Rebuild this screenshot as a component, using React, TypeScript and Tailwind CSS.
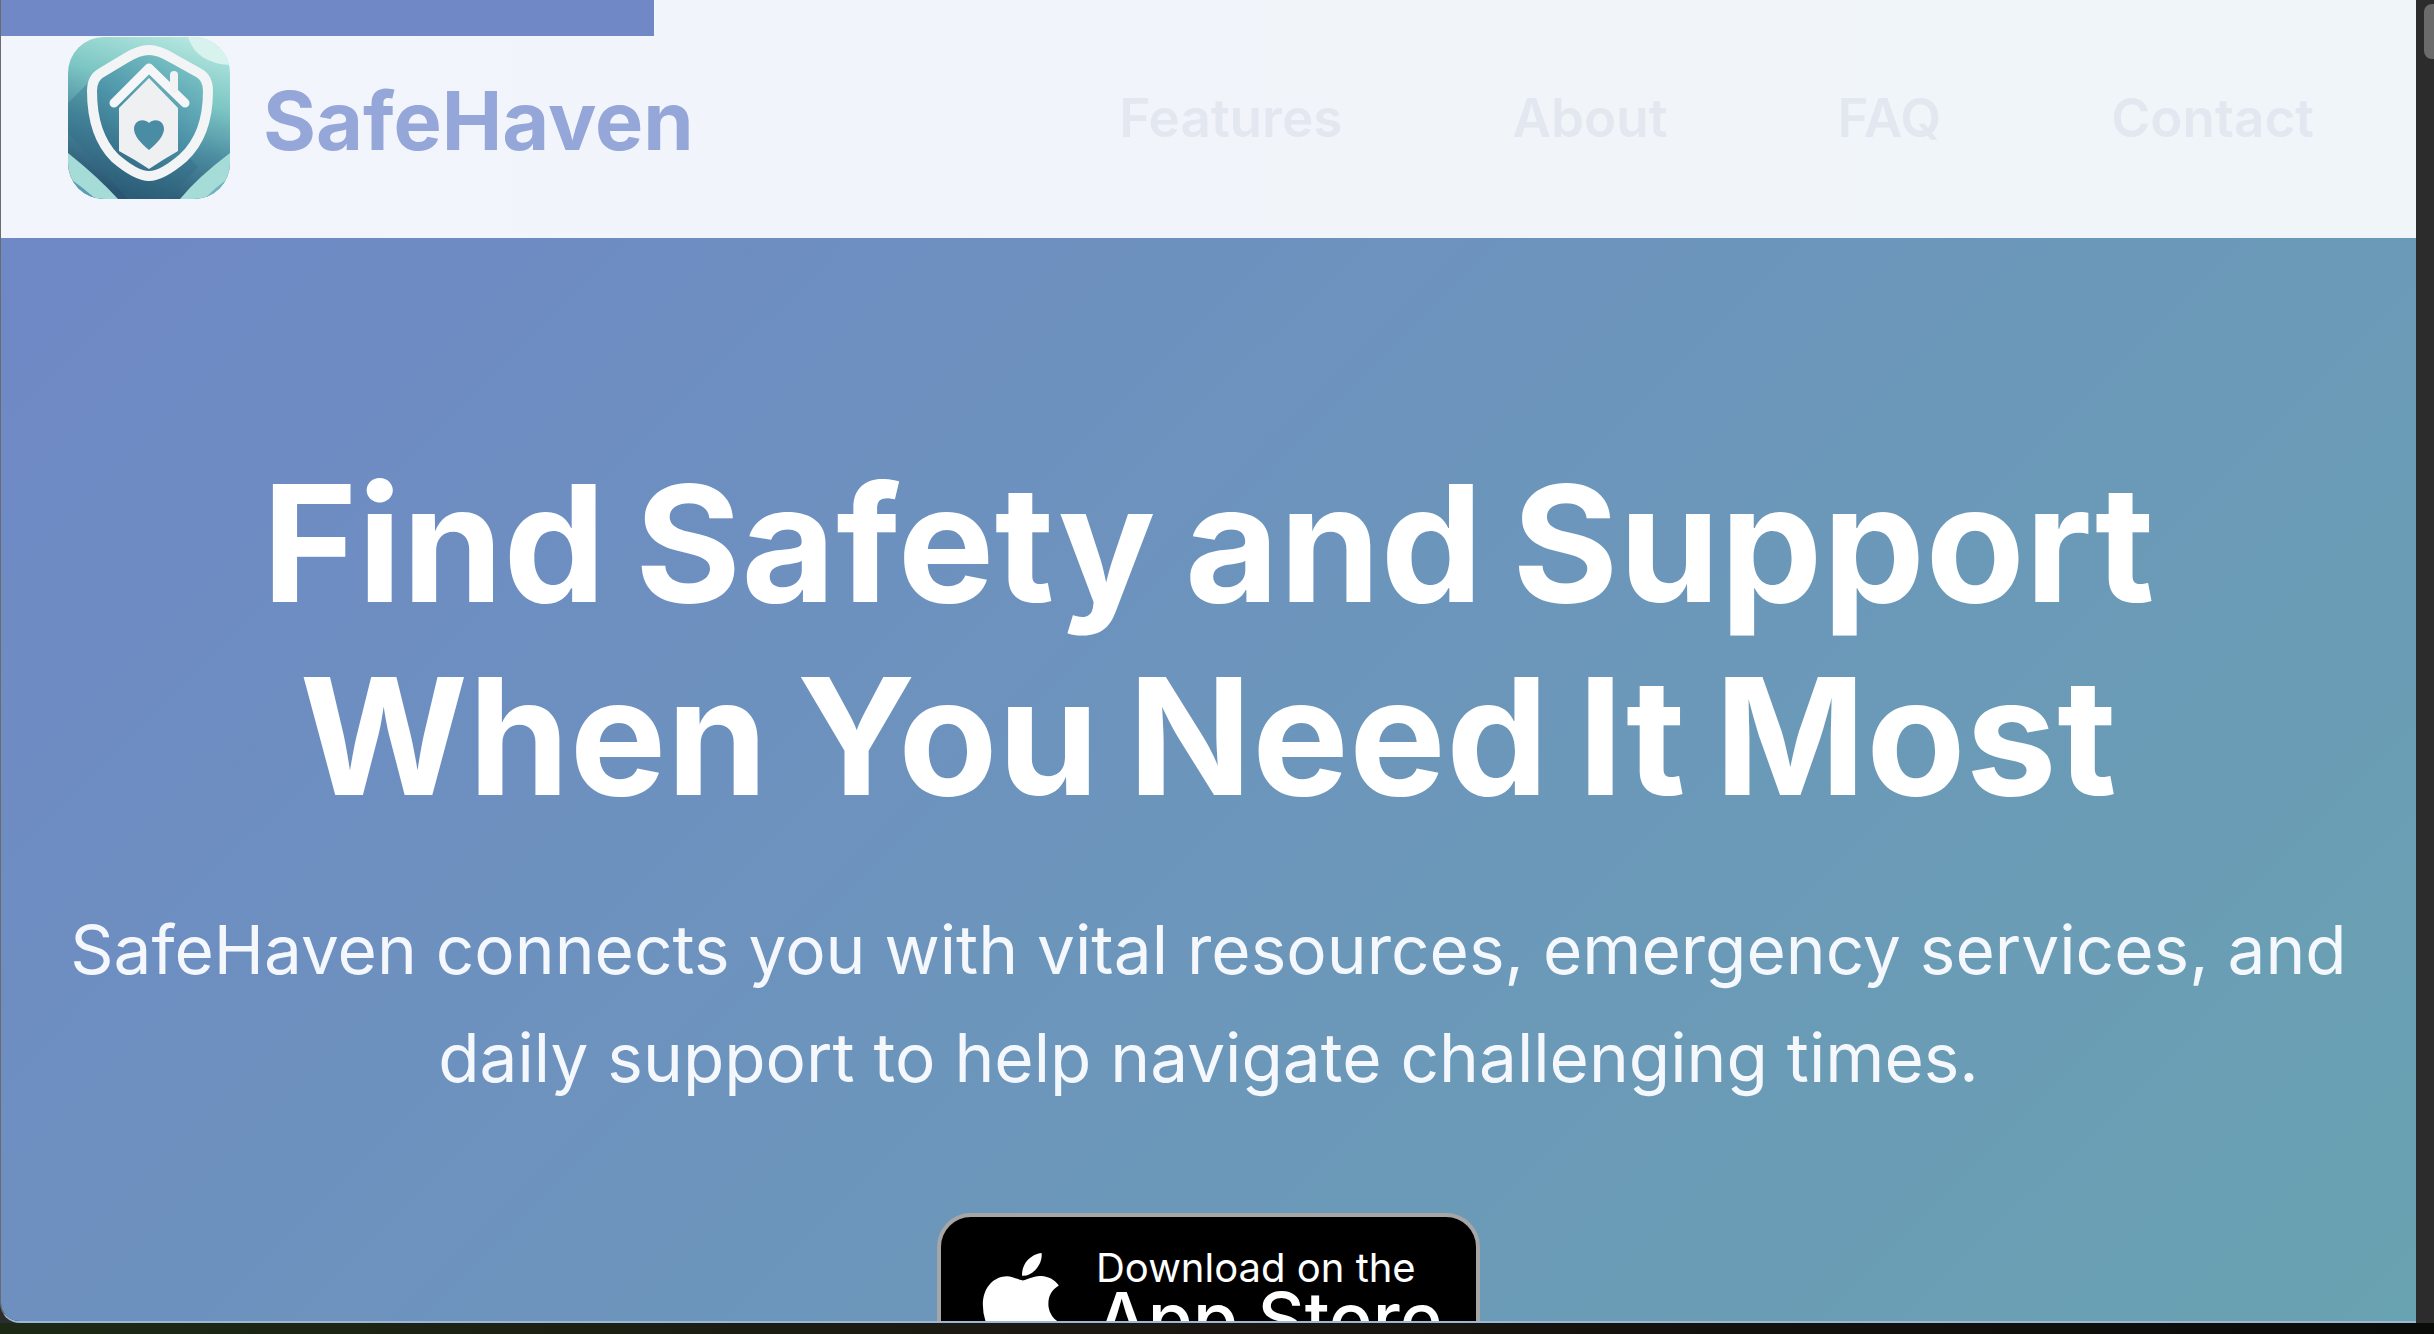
export default function App() {
  const font = { fontFamily: "Inter, 'Noto Sans', sans-serif" };
  return (
    <div className="w-[2434px] h-[1334px] flex flex-col overflow-hidden bg-[#10140d]" style={font}>
      <div className="flex h-[1323px] shrink-0 bg-[#2c2c2c]">
        <div className="w-[2416px] flex flex-col overflow-hidden rounded-bl-[20px] border-b-2 border-l border-b-[#9db8d6] border-l-white/30">
          <div className="h-[36px] w-[653px] shrink-0 bg-[#7089c6] -mb-[36px] relative z-10" />
          <header className="h-[238px] shrink-0 bg-gradient-to-r from-[#f2f5fc] to-[#f0f5f9] flex items-start justify-between pl-[67px] pr-[102px] pt-[37px]">
            <div className="flex items-start">
              <Logo />
              <span className="ml-[33px] mt-[39px] text-[81px] leading-[90px] font-bold text-[#95a6d8]">SafeHaven</span>
            </div>
            <nav className="flex gap-[170px] mt-[49px] text-[53px] leading-[64px] font-semibold text-[#e3e7ef]">
              <span>Features</span>
              <span>About</span>
              <span>FAQ</span>
              <span>Contact</span>
            </nav>
          </header>
          <main className="flex-1 min-h-0 bg-[linear-gradient(135deg,#6f88c6,#69a2b1)] flex flex-col items-center pt-[209px]">
            <h1 className="text-[162px] leading-[193px] font-bold text-white text-center tracking-[0.5px] [word-spacing:-10px] whitespace-nowrap">
              Find Safety and Support
              <br />
              When You Need It Most
            </h1>
            <p className="mt-[63px] text-[67.5px] leading-[108px] text-[#f4f7fb] text-center whitespace-nowrap">
              SafeHaven connects you with vital resources, emergency services, and
              <br />
              daily support to help navigate challenging times.
            </p>
            <div className="mt-[101px] w-[543px] h-[190px] shrink-0 rounded-[34px] border-4 border-[#a6a6a6] bg-black flex items-start pl-[41px] pt-[28px] text-white">
              <svg width="80" height="110" viewBox="0 0 384 512" fill="white" className="shrink-0 mt-[1px]" preserveAspectRatio="none">
                <path d="M318.7 268.7c-.2-36.7 16.4-64.4 50-84.8-18.8-26.9-47.2-41.7-84.7-44.6-35.5-2.8-74.3 20.7-88.5 20.7-15 0-49.4-19.7-76.4-19.7C63.3 141.2 4 184.8 4 273.5q0 39.3 14.4 81.2c12.8 36.7 59 126.7 107.2 125.2 25.2-.6 43-17.9 75.8-17.9 31.8 0 48.3 17.9 76.4 17.9 48.6-.7 90.4-82.5 102.6-119.3-65.2-30.7-61.7-90-61.7-91.9zm-56.6-164.2c27.3-32.4 24.8-61.9 24-72.5-24.1 1.4-52 16.4-67.9 34.9-17.5 19.8-27.8 44.3-25.6 71.9 26.1 2 49.9-11.4 69.5-34.3z" />
              </svg>
              <div className="ml-[34px] flex flex-col">
                <span className="text-[40px] leading-[46px] whitespace-nowrap">Download on the</span>
                <span className="text-[73px] leading-[56px] font-medium whitespace-nowrap">App Store</span>
              </div>
            </div>
          </main>
        </div>
        <div className="flex-1 pl-[8px] pt-[4px]">
          <div className="h-[55px] w-full rounded-l-[8px] bg-[#6b6b6b]" />
        </div>
      </div>
      <div className="flex-1 bg-gradient-to-r from-[#1c2a15] via-[#1a1510] to-[#0a0c0a]" />
    </div>
  );
}

function Logo() {
  return (
    <svg width="162" height="162" viewBox="0 0 162 162" className="shrink-0 relative z-20">
      <defs>
        <linearGradient id="bg" x1="0.75" y1="0" x2="0.45" y2="1">
          <stop offset="0" stopColor="#b5e7df" />
          <stop offset="0.35" stopColor="#7cc6c4" />
          <stop offset="0.65" stopColor="#4a8ba0" />
          <stop offset="1" stopColor="#2b5570" />
        </linearGradient>
        <linearGradient id="inner" x1="0.8" y1="0" x2="0.25" y2="1">
          <stop offset="0" stopColor="#7fc9c9" />
          <stop offset="0.55" stopColor="#4c93a8" />
          <stop offset="1" stopColor="#2f6680" />
        </linearGradient>
        <clipPath id="clip">
          <rect width="162" height="162" rx="36" />
        </clipPath>
      </defs>
      <g clipPath="url(#clip)">
        <rect width="162" height="162" fill="url(#bg)" />
        <path d="M0 66 L36 30 L130 130 L100 162 L60 162 L0 96 Z" fill="#2f6a85" opacity="0.35" />
        <path d="M120 0 Q128 26 162 28 L162 0 Z" fill="#d8f3ee" />
        <path d="M0 116 Q30 140 50 162 L0 162 Z" fill="#a5dcd8" />
        <path d="M0 140 Q14 150 28 162 L0 162 Z" fill="#5a9db0" />
        <path d="M162 116 Q130 140 112 162 L162 162 Z" fill="#a5dcd8" />
        <path d="M162 140 Q148 150 136 162 L162 162 Z" fill="#6fb3be" />
        <path d="M81 13 Q91 13 104 21 L131 36 Q140 41 140 54 Q140 98 115 121 Q94 139 81 139 Q68 139 47 121 Q24 98 24 54 Q24 41 33 36 L58 21 Q71 13 81 13 Z" fill="url(#inner)" stroke="#f2f4f5" strokeWidth="10" strokeLinejoin="round" />
        <path d="M81 41 L110 71 L110 114 Q96 122 81 132 Q66 122 51 114 L51 71 Z" fill="#eef0f2" />
        <path d="M46 66 L81 31 L117 66" fill="none" stroke="#f5f6f7" strokeWidth="9" strokeLinecap="round" strokeLinejoin="round" />
        <path d="M106 38 L106 52" fill="none" stroke="#f0f2f3" strokeWidth="8" strokeLinecap="round" />
        <path d="M81 113 C72 106 66 98 66 92 C66 83 76 81 81 86 C86 81 96 83 96 92 C96 98 90 106 81 113 Z" fill="#4a8ca3" />
      </g>
    </svg>
  );
}
